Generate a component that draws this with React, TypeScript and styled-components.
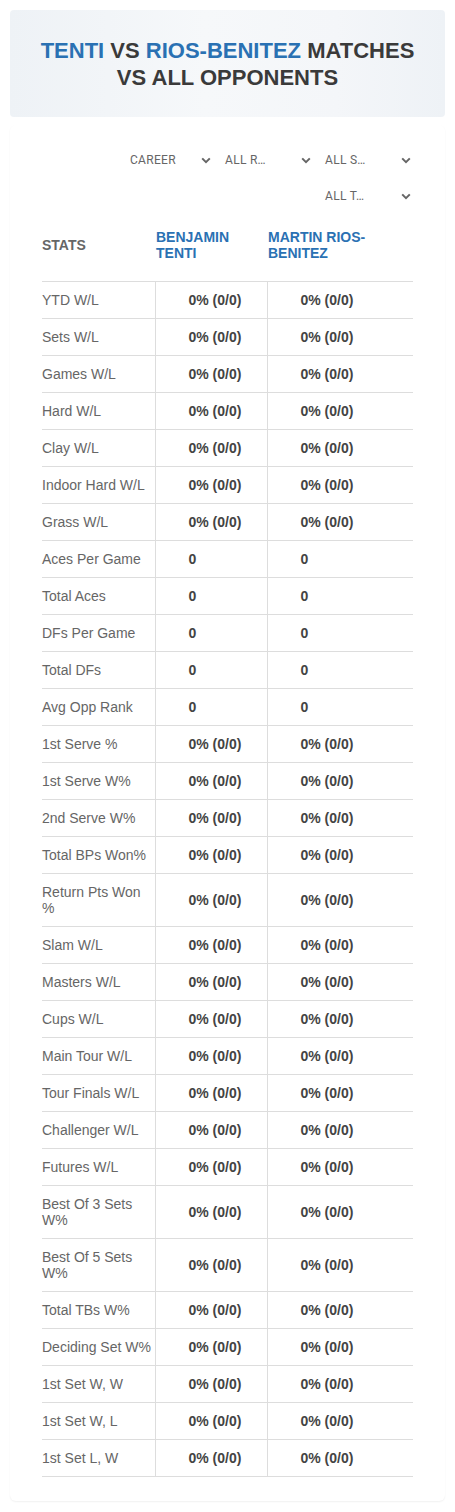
import React from "react";
import styled, { createGlobalStyle } from "styled-components";

const Global = createGlobalStyle`
  html, body { margin: 0; padding: 0; background: #ffffff; }
  body { font-family: "Liberation Sans", Arial, sans-serif; }
  * { box-sizing: border-box; }
`;

const Page = styled.div`
  width: 455px;
  padding: 10px 10px 11px;
  display: flex;
  flex-direction: column;
  gap: 8px;
`;

const HeaderCard = styled.header`
  height: 107px;
  border-radius: 4px;
  background: linear-gradient(90deg, #eef2f6 0%, #f6f8fa 45%, #f4f6f9 75%, #eef2f6 100%);
  display: flex;
  align-items: center;
  justify-content: center;
  padding: 0 16px;
`;

const Title = styled.h1`
  margin: 0;
  text-align: center;
  font-family: "Liberation Sans", Arial, sans-serif;
  font-weight: 700;
  font-size: 22px;
  line-height: 27px;
  color: #3a3a3a;
  text-transform: uppercase;
`;

const Blue = styled.span`
  color: #2a71b3;
`;

const BodyCard = styled.section`
  background: #ffffff;
  border-radius: 6px;
  box-shadow: 0 1px 2px rgba(0, 0, 0, 0.06);
  padding: 20px 32px 24px;
`;

const Filters = styled.div`
  display: flex;
  flex-wrap: wrap;
  justify-content: flex-end;
  column-gap: 10px;
  row-gap: 6px;
`;

const Select = styled.div<{ $inset: number }>`
  width: 90px;
  height: 30px;
  display: flex;
  align-items: center;
  justify-content: space-between;
  padding: 0 2px 0 ${(p) => p.$inset}px;
  font-family: Roboto, "Noto Sans", sans-serif;
  font-size: 12px;
  letter-spacing: 0.3px;
  color: #666666;
`;

const Chevron = () => (
  <svg width="10" height="7" viewBox="0 0 10 7" aria-hidden="true">
    <path d="M1.2 1.4 L5 5.2 L8.8 1.4" fill="none" stroke="#666" strokeWidth="2" />
  </svg>
);

const Table = styled.table`
  width: 371px;
  margin-top: 10px;
  border-collapse: collapse;
  table-layout: fixed;
`;

const HeadCell = styled.th<{ $blue?: boolean }>`
  text-align: left;
  vertical-align: middle;
  padding: 8px 4px 20px 1px;
  font-size: 14px;
  line-height: 16px;
  font-weight: 700;
  text-transform: uppercase;
  color: ${(p) => (p.$blue ? "#2a71b3" : "#666666")};
  &:first-child { padding-left: 0; }
`;

const Row = styled.tr`
  border-top: 1px solid #dddddd;
  &:last-child { border-bottom: 1px solid #dddddd; }
`;

const Label = styled.td`
  padding: 10px 2px 10px 0;
  font-size: 14px;
  line-height: 16px;
  color: #666666;
  vertical-align: middle;
`;

const Value = styled.td`
  padding: 10px 4px 10px 33px;
  font-size: 14px;
  line-height: 16px;
  font-weight: 700;
  color: #444444;
  border-left: 1px solid #dddddd;
  vertical-align: middle;
`;

const rows: [string, string][] = [
  ["YTD W/L", "0% (0/0)"],
  ["Sets W/L", "0% (0/0)"],
  ["Games W/L", "0% (0/0)"],
  ["Hard W/L", "0% (0/0)"],
  ["Clay W/L", "0% (0/0)"],
  ["Indoor Hard W/L", "0% (0/0)"],
  ["Grass W/L", "0% (0/0)"],
  ["Aces Per Game", "0"],
  ["Total Aces", "0"],
  ["DFs Per Game", "0"],
  ["Total DFs", "0"],
  ["Avg Opp Rank", "0"],
  ["1st Serve %", "0% (0/0)"],
  ["1st Serve W%", "0% (0/0)"],
  ["2nd Serve W%", "0% (0/0)"],
  ["Total BPs Won%", "0% (0/0)"],
  ["Return Pts Won %", "0% (0/0)"],
  ["Slam W/L", "0% (0/0)"],
  ["Masters W/L", "0% (0/0)"],
  ["Cups W/L", "0% (0/0)"],
  ["Main Tour W/L", "0% (0/0)"],
  ["Tour Finals W/L", "0% (0/0)"],
  ["Challenger W/L", "0% (0/0)"],
  ["Futures W/L", "0% (0/0)"],
  ["Best Of 3 Sets W%", "0% (0/0)"],
  ["Best Of 5 Sets W%", "0% (0/0)"],
  ["Total TBs W%", "0% (0/0)"],
  ["Deciding Set W%", "0% (0/0)"],
  ["1st Set W, W", "0% (0/0)"],
  ["1st Set W, L", "0% (0/0)"],
  ["1st Set L, W", "0% (0/0)"],
];

const filters: [string, number][] = [
  ["CAREER", 7],
  ["ALL R…", 2],
  ["ALL S…", 2],
  ["ALL T…", 2],
];

export default function App() {
  return (
    <>
      <Global />
      <Page>
        <HeaderCard>
          <Title>
            <Blue>Tenti</Blue> vs <Blue>Rios-Benitez</Blue> Matches vs All Opponents
          </Title>
        </HeaderCard>
        <BodyCard>
          <Filters>
            {filters.map(([f, inset]) => (
              <Select key={f} $inset={inset}>
                <span>{f}</span>
                <Chevron />
              </Select>
            ))}
          </Filters>
          <Table>
            <colgroup>
              <col style={{ width: 113 }} />
              <col style={{ width: 112 }} />
              <col style={{ width: 146 }} />
            </colgroup>
            <thead>
              <tr>
                <HeadCell>Stats</HeadCell>
                <HeadCell $blue>Benjamin Tenti</HeadCell>
                <HeadCell $blue>Martin Rios-Benitez</HeadCell>
              </tr>
            </thead>
            <tbody>
              {rows.map(([label, v]) => (
                <Row key={label}>
                  <Label>{label}</Label>
                  <Value>{v}</Value>
                  <Value>{v}</Value>
                </Row>
              ))}
            </tbody>
          </Table>
        </BodyCard>
      </Page>
    </>
  );
}
